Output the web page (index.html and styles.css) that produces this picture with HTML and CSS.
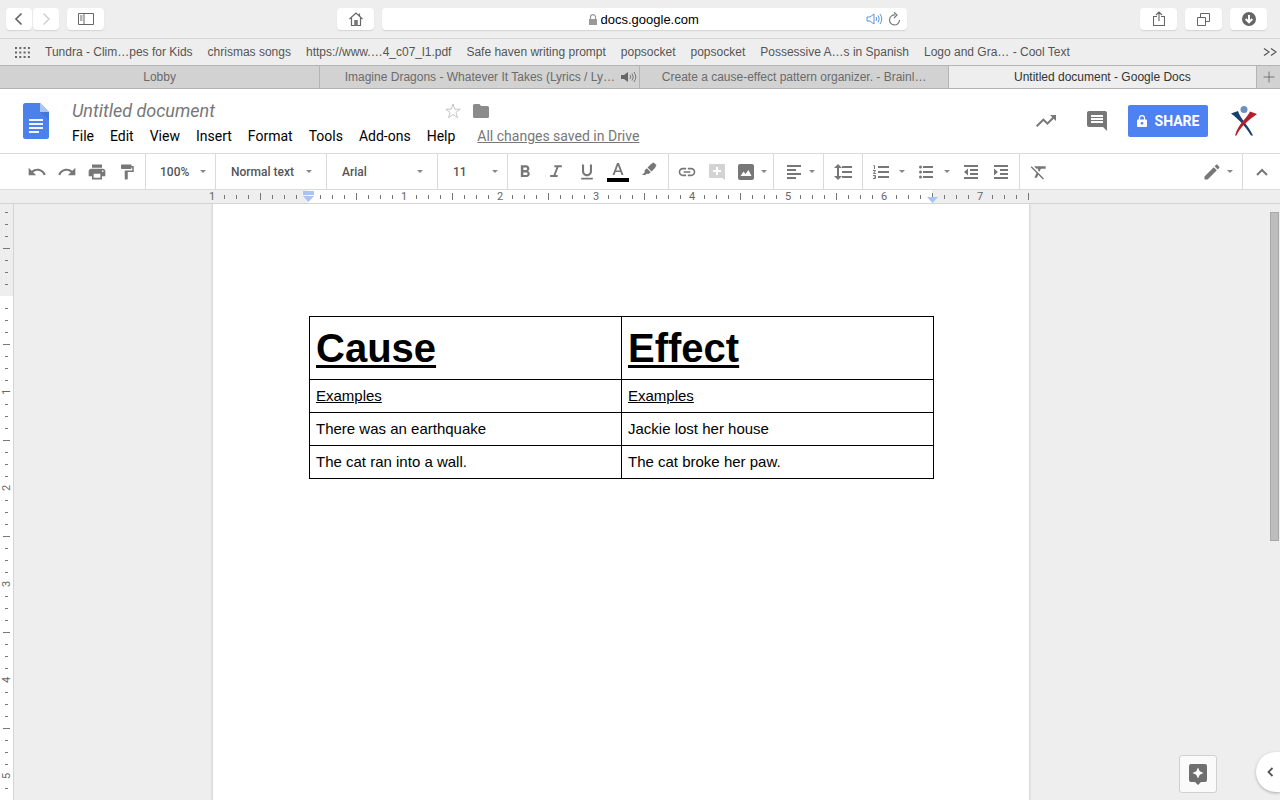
FILE: index.html
```html
<!DOCTYPE html>
<html lang="en">
<head>
    <meta charset="UTF-8">
    <meta name="viewport" content="width=device-width, initial-scale=1.0">
    <title>Untitled document - Google Docs</title>
    <link rel="stylesheet" href="styles.css">
</head>
<body>
    <!-- ruler ticks, one inch each -->
    <svg class="defs" aria-hidden="true">
        <symbol id="ticks-h" viewBox="0 0 96 14" preserveAspectRatio="xMinYMin slice">
            <path d="M12.5 5v4M24.5 5v4M36.5 5v4M48.5 3v7M60.5 5v4M72.5 5v4M84.5 5v4" stroke="#777" shape-rendering="crispEdges"/>
        </symbol>
        <symbol id="ticks-v" viewBox="0 0 13 96">
            <path d="M5 12.5h3M5 24.5h3M5 36.5h3M3 48.5h7M5 60.5h3M5 72.5h3M5 84.5h3" stroke="#777" shape-rendering="crispEdges"/>
        </symbol>
    </svg>

    <div class="browser-bar">
        <div class="nav-buttons">
            <button class="safari-btn nav" aria-label="Back"><svg width="10" height="14" viewBox="0 0 10 14"><path d="M7.5 1.5L2 7l5.500 5.500" fill="none" stroke="#666" stroke-width="1.700"/></svg></button>
            <button class="safari-btn nav" aria-label="Forward"><svg width="10" height="14" viewBox="0 0 10 14"><path d="M2.500 1.500L8 7l-5.500 5.500" fill="none" stroke="#d0d0d0" stroke-width="1.500"/></svg></button>
            <button class="safari-btn sidebar-btn" aria-label="Sidebar"><svg width="16" height="12" viewBox="0 0 16 12"><path d="M.5.5h15v11H.5zM6 .5v11M2 3h2.500M2 5h2.500M2 7h2.500" fill="none" stroke="#666"/></svg></button>
        </div>
        <div class="address">
            <button class="safari-btn" aria-label="Home"><svg width="14" height="14" viewBox="0 0 14 14"><path d="M.5 7L7 1l6.500 6M2.500 6v7.500h9V6M10.500 4V1.500" fill="none" stroke="#666" stroke-width="1.200"/><path d="M5.200 8h3.600v6H5.200z" fill="#777"/></svg></button>
            <div class="url-box">
                <svg width="8" height="11" viewBox="0 0 8 11"><rect y="5" width="8" height="6" fill="#999"/><path d="M1.500 5V3a2.500 2.300 0 015 0v2" fill="none" stroke="#999" stroke-width="1.200"/></svg>
                <input type="text" class="url" value="docs.google.com" aria-label="Address">
                <div class="url-icons">
                    <button class="plain" aria-label="Mute"><svg width="17" height="12" viewBox="0 0 17 12"><path d="M1 4h3l4-3v10L4 8H1zM10 4q1.500 2 0 4M12 2.500q2.500 3.500 0 7M14 1q3.500 5 0 10" fill="none" stroke="#5b94dc"/></svg></button>
                    <button class="plain" aria-label="Reload"><svg width="13" height="14" viewBox="0 0 13 14"><path d="M7 3A5 5 0 1011.500 8" fill="none" stroke="#777" stroke-width="1.200"/><path d="M6 .3L9 3 6 6" fill="none" stroke="#777" stroke-width="1.200"/></svg></button>
                </div>
            </div>
        </div>
        <div class="right-buttons">
            <button class="safari-btn" aria-label="Share page"><svg width="12" height="16" viewBox="0 0 12 16"><path d="M4 5.500H.5v9h11v-9H8M6 10V1M3 4l3-3 3 3" fill="none" stroke="#666" stroke-width="1.100"/></svg></button>
            <button class="safari-btn" aria-label="Show tabs"><svg width="13" height="13" viewBox="0 0 13 13"><path d="M.5 4.500h8v8h-8zM3.500 4V.5h9v8H9" fill="none" stroke="#666"/></svg></button>
            <button class="safari-btn" aria-label="Downloads"><svg width="14" height="14" viewBox="0 0 14 14"><circle cx="7" cy="7" r="7" fill="#666"/><path d="M7 3v7M3.700 7L7 10.300 10.300 7" fill="none" stroke="#fff" stroke-width="2"/></svg></button>
        </div>
    </div>

    <nav class="bookmarks">
        <svg width="15" height="11" viewBox="0 0 15 11"><path d="M0 1h15M0 5.500h15M0 10h15" stroke="#666" stroke-width="2" stroke-dasharray="2 2.300"/></svg>
        <a href="#">Tundra - Clim…pes for Kids</a>
        <a href="#">chrismas songs</a>
        <a href="#">https://www.…4_c07_l1.pdf</a>
        <a href="#">Safe haven writing prompt</a>
        <a href="#">popsocket</a>
        <a href="#">popsocket</a>
        <a href="#">Possessive A…s in Spanish</a>
        <a href="#">Logo and Gra… - Cool Text</a>
        <button class="plain more" aria-label="More bookmarks"><svg width="14" height="8" viewBox="0 0 14 8"><path d="M1 .5L6 4 1 7.500M8 .5L13 4 8 7.500" fill="none" stroke="#555" stroke-width="1.200"/></svg></button>
    </nav>

    <div class="tabs">
        <button class="tab wide">Lobby</button>
        <button class="tab wide">Imagine Dragons - Whatever It Takes (Lyrics / Ly…
            <svg class="speaker" width="17" height="12" viewBox="0 0 17 12"><path d="M1 4h3l4-3v10L4 8H1z" fill="#666"/><path d="M10 4q1.500 2 0 4M12 2.500q2.500 3.500 0 7M14 1q3.500 5 0 10" fill="none" stroke="#777"/></svg>
        </button>
        <button class="tab">Create a cause-effect pattern organizer. - Brainl…</button>
        <button class="tab active">Untitled document - Google Docs</button>
        <button class="tab new-tab" aria-label="New tab"><svg width="12" height="12" viewBox="0 0 12 12"><path d="M6 .5v11M.5 6h11" stroke="#777"/></svg></button>
    </div>

    <header class="docs-header">
        <svg class="logo" width="26" height="36" viewBox="0 0 26 36"><path d="M2.500 0H17l9 9v24.500a2.500 2.500 0 01-2.500 2.500h-21A2.500 2.500 0 010 33.500v-31A2.500 2.500 0 012.500 0z" fill="#4c80ea"/><path d="M17 0l9 9h-9z" fill="#a9c4f8"/><path d="M17 9h9v8z" fill="#4576dc"/><path d="M6 17h14M6 21h14M6 25h14M6 29h10" stroke="#f1f5fe" stroke-width="2"/></svg>
        <div class="doc-info">
            <div class="title-row">
                <input type="text" class="doc-title" value="Untitled document" aria-label="Document title">
                <button class="plain" aria-label="Star"><svg width="16" height="16" viewBox="0 0 16 16"><path d="M8 1l1.800 5.200h5.400l-4.300 3.200 1.600 5.300L8 11.500l-4.500 3.200 1.600-5.300L.8 6.200h5.400z" fill="none" stroke="#c4c4c4"/></svg></button>
                <button class="plain" aria-label="Move to folder"><svg width="16" height="14" viewBox="0 0 16 14"><path d="M1.500 0h5l1.500 2h6.500A1.500 1.500 0 0116 3.500v9a1.500 1.500 0 01-1.500 1.500h-13A1.500 1.500 0 010 12.500v-11A1.500 1.500 0 011.500 0z" fill="#8b8b8b"/></svg></button>
            </div>
            <div class="menu">
                <button>File</button>
                <button>Edit</button>
                <button>View</button>
                <button>Insert</button>
                <button>Format</button>
                <button>Tools</button>
                <button>Add-ons</button>
                <button>Help</button>
                <a href="#" class="saved">All changes saved in Drive</a>
            </div>
        </div>
        <div class="header-actions">
            <button class="plain" aria-label="Activity"><svg width="24" height="24" viewBox="0 0 24 24"><path d="M16 6l2.290 2.290-4.880 4.880-4-4L2 16.590 3.410 18l6-6 4 4 6.300-6.290L22 12V6z" fill="#777"/></svg></button>
            <button class="plain" aria-label="Comments"><svg width="24" height="24" viewBox="0 0 24 24"><path d="M21.990 4c0-1.100-.89-2-1.990-2H4c-1.100 0-2 .9-2 2v12c0 1.100.9 2 2 2h14l4 4-.01-18zM18 14H6v-2h12v2zm0-3H6V9h12v2zm0-3H6V6h12v2z" fill="#777"/></svg></button>
            <button class="share-btn"><svg width="10" height="13" viewBox="0 0 10 13"><rect y="4.500" width="10" height="7.500" rx="1" fill="#fff"/><path d="M2.500 5V3a2.500 2.400 0 015 0v2" fill="none" stroke="#fff" stroke-width="1.200"/><circle cx="5" cy="8.200" r="1.300" fill="#4d82f0"/></svg>SHARE</button>
            <svg width="26" height="30" viewBox="0 0 26 30"><circle cx="13" cy="3.500" r="3.500" fill="#6b93bd"/><path d="M0 7.500l7-2.500c2.500 8 10 14 15 24.500h-2C15 21 9 14.500 0 7.500z" fill="#17406f"/><path d="M26 8l-7-2.500C16.500 12 8 16 4 29.500h1.500C10 20 17 14.500 26 8z" fill="#b3202b"/></svg>
        </div>
    </header>

    <div class="toolbar">
        <div class="group first">
            <button aria-label="Undo"><svg class="i20" viewBox="0 0 24 24"><path d="M12.500 8c-2.650 0-5.050.99-6.900 2.600L2 7v9h9l-3.620-3.620c1.390-1.160 3.160-1.880 5.120-1.880 3.540 0 6.550 2.310 7.600 5.500l2.370-.78C21.080 11.030 17.150 8 12.500 8z"/></svg></button>
            <button aria-label="Redo"><svg class="i20" viewBox="0 0 24 24"><path d="M18.400 10.600C16.550 8.990 14.150 8 11.500 8c-4.650 0-8.580 3.030-9.960 7.220L3.900 16c1.050-3.190 4.050-5.500 7.600-5.500 1.950 0 3.730.72 5.120 1.880L13 16h9V7l-3.600 3.600z"/></svg></button>
            <button aria-label="Print"><svg class="i20" viewBox="0 0 24 24"><path d="M19 8H5c-1.660 0-3 1.340-3 3v6h4v4h12v-4h4v-6c0-1.660-1.340-3-3-3zm-3 11H8v-5h8v5zm3-7c-.55 0-1-.45-1-1s.45-1 1-1 1 .45 1 1-.45 1-1 1zm-1-9H6v4h12V3z"/></svg></button>
            <button aria-label="Paint format"><svg class="i18" viewBox="0 0 24 24"><path d="M18 4V3c0-.55-.45-1-1-1H5c-.55 0-1 .45-1 1v4c0 .55.45 1 1 1h12c.55 0 1-.45 1-1V6h1v4H9v11c0 .55.45 1 1 1h2c.55 0 1-.45 1-1v-9h8V4h-3z"/></svg></button>
        </div>
        <div class="group drop zoom-size"><select aria-label="Zoom"><option>100%</option></select></div>
        <div class="group drop style-name"><select aria-label="Styles"><option>Normal text</option></select></div>
        <div class="group drop font-name"><select aria-label="Font"><option>Arial</option></select></div>
        <div class="group drop font-size"><select aria-label="Font size"><option>11</option></select></div>
        <div class="group format">
            <button aria-label="Bold"><svg class="i20" viewBox="0 0 24 24"><path d="M15.600 10.790c.97-.67 1.650-1.770 1.650-2.790 0-2.260-1.750-4-4-4H7v14h7.040c2.090 0 3.710-1.700 3.710-3.790 0-1.520-.86-2.820-2.150-3.420zM10 6.500h3c.83 0 1.500.67 1.500 1.500s-.67 1.500-1.500 1.500h-3v-3zm3.500 9H10v-3h3.500c.83 0 1.500.67 1.500 1.500s-.67 1.500-1.500 1.500z"/></svg></button>
            <button aria-label="Italic"><svg class="i20" viewBox="0 0 24 24"><path d="M10 4v2.300h2.600L9 15.700H5V18h9v-2.300h-2.600L15 6.300h4V4z"/></svg></button>
            <button aria-label="Underline"><svg class="i20" viewBox="0 0 24 24"><path d="M12 17c3.310 0 6-2.690 6-6V3h-2.500v8c0 1.930-1.570 3.500-3.500 3.500S8.500 12.930 8.500 11V3H6v8c0 3.310 2.690 6 6 6zm-7 2v2h14v-2H5z"/></svg></button>
            <button aria-label="Text color"><svg width="22" height="20" viewBox="0 0 22 20"><path fill-rule="evenodd" d="M10 1h2l4.500 12h-2l-1.100-3H8.600l-1.100 3h-2zm1 2.500L9.200 8.400h3.600z"/><path d="M0 16h22v4H0z" fill="#000"/></svg></button>
            <button aria-label="Highlight color"><svg width="16" height="20" viewBox="0 0 16 20"><path d="M10 2l2.500-1.500L15.500 3 14 6l-3.500 3.500L6.500 5.500zM5.800 6.200l4 4L7.500 12l-2-.3-1.200 1.300H1L3.800 10.200 3.500 8.500z"/></svg></button>
        </div>
        <div class="group insert">
            <button aria-label="Insert link"><svg class="i20" viewBox="0 0 24 24"><path d="M3.900 12c0-1.710 1.390-3.100 3.100-3.100h4V7H7c-2.760 0-5 2.240-5 5s2.240 5 5 5h4v-1.900H7c-1.710 0-3.100-1.390-3.100-3.100zM8 13h8v-2H8v2zm9-6h-4v1.900h4c1.710 0 3.100 1.390 3.100 3.100s-1.390 3.100-3.100 3.100h-4V17h4c2.760 0 5-2.240 5-5s-2.240-5-5-5z"/></svg></button>
            <button aria-label="Add comment"><svg width="16" height="16" viewBox="0 0 16 16"><path d="M1 0h14q1 0 1 1v15l-3-2H1q-1 0-1-1V1q0-1 1-1z" fill="#d3d3d3"/><path d="M8 3v8M4 7h8" stroke="#fff" stroke-width="2"/></svg></button>
            <button class="with-caret" aria-label="Insert image"><svg width="16" height="16" viewBox="0 0 16 16"><rect width="16" height="16" rx="2"/><path d="M2.500 12l3-4.500 2 2.500 3-4 3 6z" fill="#fff"/></svg></button>
        </div>
        <div class="group align">
            <button class="with-caret" aria-label="Align"><svg width="16" height="16" viewBox="0 0 16 16"><path d="M1 1h14v2H1zM1 5h9v2H1zM1 9h14v2H1zM1 13h9v2H1z"/></svg></button>
        </div>
        <div class="group spacing">
            <button aria-label="Line spacing"><svg width="18" height="16" viewBox="0 0 18 16"><path d="M8 2h10v2H8zM8 7h10v2H8zM8 12h10v2H8zM3 4H0l4-4 4 4H5v8h3l-4 4-4-4h3z"/></svg></button>
        </div>
        <div class="group lists">
            <button class="with-caret" aria-label="Numbered list"><svg width="16" height="16" viewBox="0 0 16 16"><path d="M5 2h11v2H5zM5 7h11v2H5zM5 12h11v2H5z"/><path d="M.5 1.500h1V5M0 6.500h2.500L.5 9.500h2.500M0 11.500h2.500v3H0M.8 13h1.700" fill="none" stroke="#777"/></svg></button>
            <button class="with-caret" aria-label="Bulleted list"><svg width="16" height="16" viewBox="0 0 16 16"><path d="M5 2h10v2H5zM5 7h10v2H5zM5 12h10v2H5z"/><circle cx="2.500" cy="3" r="1.500"/><circle cx="2.500" cy="8" r="1.500"/><circle cx="2.500" cy="13" r="1.500"/></svg></button>
            <button aria-label="Decrease indent"><svg width="16" height="16" viewBox="0 0 16 16"><path d="M1 1h14v2H1zM7 5h8v2H7zM7 9h8v2H7zM1 13h14v2H1zM5 4.500v7L1 8z"/></svg></button>
            <button aria-label="Increase indent"><svg width="16" height="16" viewBox="0 0 16 16"><path d="M1 1h14v2H1zM7 5h8v2H7zM7 9h8v2H7zM1 13h14v2H1zM1 4.500v7L5 8z"/></svg></button>
        </div>
        <div class="group clear">
            <button aria-label="Clear formatting"><svg class="i20" viewBox="0 0 24 24"><path d="M3.270 5L2 6.270l6.970 6.970L6.500 19h3l1.570-3.660L16.730 21 18 19.730 3.550 5.270 3.270 5zM6 5v.18L8.820 8h2.400l-.72 1.680 2.100 2.100L14.210 8H20V5H6z"/></svg></button>
        </div>
        <div class="mode">
            <button class="with-caret" aria-label="Editing mode"><svg class="i20" viewBox="0 0 24 24"><path d="M3 17.250V21h3.750L17.810 9.940l-3.750-3.750L3 17.250zM20.710 7.040c.39-.39.39-1.020 0-1.410l-2.340-2.340c-.39-.39-1.020-.39-1.410 0l-1.830 1.830 3.750 3.750 1.830-1.830z"/></svg></button>
        </div>
        <button class="collapse" aria-label="Hide menus"><svg width="12" height="8" viewBox="0 0 12 8"><path d="M1 7l5-5 5 5" fill="none" stroke="#777" stroke-width="2"/></svg></button>
    </div>

    <div class="ruler">
        <div class="inches">
            <div class="inch"><span>1</span><svg><use href="#ticks-h"/></svg></div>
            <div class="inch inside"><svg><use href="#ticks-h"/></svg>
                <svg class="marker" viewBox="0 0 11 13"><path d="M0 1h11v4H0zM0 6h11l-5.500 6z" fill="#a9c3f2"/></svg>
            </div>
            <div class="inch inside"><span>1</span><svg><use href="#ticks-h"/></svg></div>
            <div class="inch inside"><span>2</span><svg><use href="#ticks-h"/></svg></div>
            <div class="inch inside"><span>3</span><svg><use href="#ticks-h"/></svg></div>
            <div class="inch inside"><span>4</span><svg><use href="#ticks-h"/></svg></div>
            <div class="inch inside"><span>5</span><svg><use href="#ticks-h"/></svg></div>
            <div class="inch edge"><span>6</span><svg><use href="#ticks-h"/></svg>
                <svg class="marker right" viewBox="0 0 11 13"><path d="M0 7h11l-5.500 6z" fill="#a9c3f2"/></svg>
            </div>
            <div class="inch last"><span>7</span><svg><use href="#ticks-h"/></svg></div>
        </div>
    </div>

    <div class="workspace">
        <div class="ruler-v">
            <div class="inch-v"><svg><use href="#ticks-v"/></svg></div>
            <div class="inch-v inside"><svg><use href="#ticks-v"/></svg></div>
            <div class="inch-v inside"><span>1</span><svg><use href="#ticks-v"/></svg></div>
            <div class="inch-v inside"><span>2</span><svg><use href="#ticks-v"/></svg></div>
            <div class="inch-v inside"><span>3</span><svg><use href="#ticks-v"/></svg></div>
            <div class="inch-v inside"><span>4</span><svg><use href="#ticks-v"/></svg></div>
            <div class="inch-v inside"><span>5</span><svg><use href="#ticks-v"/></svg></div>
        </div>
        <main class="canvas">
            <div class="page">
                <table>
                    <tr><th>Cause</th><th>Effect</th></tr>
                    <tr><td><u>Examples</u></td><td><u>Examples</u></td></tr>
                    <tr><td>There was an earthquake</td><td>Jackie lost her house</td></tr>
                    <tr><td>The cat ran into a wall.</td><td>The cat broke her paw.</td></tr>
                </table>
            </div>
        </main>
        <div class="scrollbar"><div class="thumb"></div></div>
        <button class="explore" aria-label="Explore"><svg width="18" height="21" viewBox="0 0 18 21"><path d="M2 0h14a2 2 0 012 2v14a2 2 0 01-2 2h-4l-3 3-3-3H2a2 2 0 01-2-2V2a2 2 0 012-2z" fill="#6e6e6e"/><path d="M9 3.500l1.700 3.800L14.500 9l-3.800 1.700L9 14.500l-1.700-3.800L3.500 9l3.800-1.700z" fill="#fff"/></svg></button>
        <button class="side-toggle" aria-label="Show side panel"><svg width="7" height="10" viewBox="0 0 7 10"><path d="M5.500 1l-4 4 4 4" fill="none" stroke="#555" stroke-width="1.800"/></svg></button>
    </div>
</body>
</html>
```

FILE: styles.css
```css
* {
    box-sizing: border-box;
}
body {
    margin: 0;
    height: 100vh;
    display: flex;
    flex-direction: column;
    overflow: hidden;
    background: #eee;
    font-family: Roboto, Arial, sans-serif;
}
button, input, select {
    font: inherit;
    color: inherit;
    border: none;
    background: none;
    padding: 0;
    margin: 0;
    outline: none;
}
button {
    display: flex;
    align-items: center;
    justify-content: center;
}
svg {
    display: block;
    flex-shrink: 0;
}
.defs {
    position: absolute;
    width: 0;
    height: 0;
}

/* Browser chrome */
.browser-bar {
    height: 39px;
    flex-shrink: 0;
    display: flex;
    align-items: center;
    padding: 0 13px 0 6px;
    border-bottom: 1px solid #d6d6d6;
    font-family: "Liberation Sans", Arial, sans-serif;
}
.nav-buttons, .right-buttons {
    display: flex;
    gap: 8px;
}
.nav-buttons {
    gap: 1px;
}
.safari-btn {
    width: 37px;
    height: 22px;
    background: #fff;
    border-radius: 4px;
    box-shadow: 0 1px 1px #d4d4d4;
}
.nav {
    width: 26px;
}
.sidebar-btn {
    margin-left: 7px;
}
.address {
    flex: 1;
    margin: 0 233px;
    display: flex;
    gap: 8px;
}
.url-box {
    flex: 1;
    height: 22px;
    background: #fff;
    border-radius: 4px;
    box-shadow: 0 1px 1px #d4d4d4;
    display: flex;
    align-items: center;
    justify-content: center;
    gap: 4px;
    position: relative;
}
.url {
    width: 100px;
    font-size: 13px;
    color: #000;
}
.url-icons {
    position: absolute;
    right: 6px;
    display: flex;
    align-items: center;
    gap: 5px;
}
.bookmarks {
    height: 26px;
    flex-shrink: 0;
    display: flex;
    align-items: center;
    gap: 15px;
    padding: 0 3px 0 15px;
    font-family: "Liberation Sans", Arial, sans-serif;
    font-size: 12px;
    white-space: nowrap;
}
.bookmarks a {
    color: #555;
    text-decoration: none;
}
.more {
    margin-left: auto;
}
.tabs {
    height: 24px;
    flex-shrink: 0;
    display: flex;
    border-top: 1px solid #b4b4b4;
    border-bottom: 1px solid #b4b4b4;
    background: #d2d2d2;
    font-family: "Liberation Sans", Arial, sans-serif;
    font-size: 12px;
    color: #6b6b6b;
}
.tab {
    flex: 308 1 0;
    border-right: 1px solid #b4b4b4;
    white-space: nowrap;
    position: relative;
}
.tab.wide {
    flex-grow: 320;
}
.tab.active {
    background: #eee;
    color: #333;
}
.tab.new-tab {
    flex: 0 0 23px;
    border-right: none;
}
.speaker {
    position: absolute;
    right: 2px;
}

/* Docs header */
.docs-header {
    height: 64px;
    flex-shrink: 0;
    display: flex;
    padding: 0 23px;
    background: #fff;
}
.logo {
    margin-top: 14px;
}
.doc-info {
    margin-left: 23px;
    padding-top: 10px;
}
.title-row {
    display: flex;
    align-items: center;
    height: 24px;
    gap: 12px;
}
.doc-title {
    width: 361px;
    padding-bottom: 2px;
    font-size: 18px;
    font-style: italic;
    color: #777;
}
.menu {
    display: flex;
    align-items: center;
    height: 26px;
    gap: 16px;
    font-size: 14px;
    color: #000;
    white-space: nowrap;
}
.saved {
    margin-left: 6px;
    color: #777;
}
.header-actions {
    margin-left: auto;
    display: flex;
    align-items: center;
    gap: 23px;
}
.header-actions .plain {
    margin-right: 4px;
}
.header-actions .share-btn {
    margin-left: -8px;
}
.share-btn {
    width: 80px;
    height: 32px;
    gap: 8px;
    border-radius: 2px;
    background: #4d82f0;
    color: #fff;
    font-size: 14px;
    font-weight: 700;
}

/* Toolbar */
.toolbar {
    height: 37px;
    flex-shrink: 0;
    display: flex;
    background: #fff;
    border-top: 1px solid #dadada;
    border-bottom: 1px solid #dadada;
    font-size: 12px;
    color: #555;
}
.toolbar svg {
    fill: #777;
}
.i20 {
    width: 20px;
    height: 20px;
}
.i18 {
    width: 18px;
    height: 18px;
}
.group {
    display: flex;
    align-items: center;
    border-right: 1px solid #dadada;
}
.group button {
    width: 30px;
    height: 30px;
    flex-shrink: 0;
}
.first {
    padding: 0 3px 0 22px;
}
.drop::after, .with-caret::after {
    content: "";
    border: 3px solid transparent;
    border-top-color: #888;
    border-bottom: none;
}
.drop {
    padding: 0 9px 0 15px;
}
.drop select {
    flex: 1;
    min-width: 0;
    appearance: none;
    font-weight: 500;
}
.zoom-size {
    width: 70px;
    padding-left: 14px;
}
.style-name, .font-name {
    width: 111px;
    padding-right: 14px;
}
.font-size {
    width: 70px;
}
.format {
    width: 161px;
    padding-left: 1px;
}
.format button {
    width: 31px;
}
.insert {
    width: 105px;
    padding-left: 3px;
}
.group .with-caret {
    width: 40px;
    gap: 7px;
}
.align {
    width: 50px;
    padding-left: 6px;
}
.spacing {
    width: 39px;
    padding-left: 4px;
}
.lists {
    width: 157px;
    padding-left: 3px;
}
.group.lists .with-caret {
    width: 45px;
    gap: 10px;
}
.clear {
    border-right: none;
    padding-left: 4px;
}
.mode {
    margin-left: auto;
    display: flex;
    padding-right: 9px;
    border-right: 1px solid #dadada;
}
.mode .with-caret {
    gap: 5px;
}
.collapse {
    width: 37px;
}

/* Rulers */
.ruler {
    height: 14px;
    flex-shrink: 0;
    display: flex;
    justify-content: center;
    padding-right: 39px;
    border-bottom: 1px solid #d4d4d4;
    color: #666;
    font-size: 11px;
}
.inches {
    display: flex;
    width: 817px;
}
.inch {
    position: relative;
    width: 96px;
    flex-shrink: 0;
    height: 13px;
}
.inch > svg {
    width: 100%;
    height: 14px;
}
.inside {
    background: #fff;
}
.edge {
    background: linear-gradient(90deg, #fff 50%, #eee 50%);
}
.last {
    width: 49px;
}
.inch span {
    position: absolute;
    left: -6px;
    width: 12px;
    line-height: 14px;
    text-align: center;
}
.inch > .marker {
    position: absolute;
    left: -5px;
    top: 0;
    width: 11px;
    height: 13px;
    z-index: 1;
}
.inch > .marker.right {
    left: 43px;
}
.workspace {
    flex: 1;
    min-height: 0;
    display: flex;
    position: relative;
}
.ruler-v {
    width: 14px;
    flex-shrink: 0;
    overflow: hidden;
    border-right: 1px solid #d4d4d4;
    color: #666;
    font-size: 11px;
}
.inch-v {
    position: relative;
    height: 96px;
}
.inch-v:first-child {
    margin-top: -4px;
}
.inch-v svg {
    width: 13px;
    height: 96px;
}
.inch-v span {
    position: absolute;
    top: -6px;
    height: 12px;
    line-height: 14px;
    writing-mode: vertical-rl;
    transform: rotate(180deg);
    text-align: center;
}

/* Document */
.canvas {
    flex: 1;
    display: flex;
    justify-content: center;
    padding-right: 42px;
    overflow: hidden;
}
.page {
    width: 816px;
    padding: 112px 95px 0 96px;
    background: #fff;
    box-shadow: 0 0 2px 1px #d0d0d0;
    font-family: "Liberation Sans", Arial, sans-serif;
    color: #000;
}
table {
    width: 100%;
    border-collapse: collapse;
    table-layout: fixed;
}
th, td {
    border: 1px solid #000;
    padding: 0 6px;
    height: 33px;
    font-size: 15px;
    text-align: left;
}
td {
    padding-bottom: 2px;
}
th {
    height: 63px;
    font-size: 40px;
    text-decoration: underline;
    text-decoration-thickness: 3px;
    text-underline-offset: 3px;
}
.scrollbar {
    width: 10px;
    padding: 8px 1px 0 0;
}
.thumb {
    height: 329px;
    background: #bdbdbd;
    border: 1px solid #a8a8a8;
}
.explore {
    position: absolute;
    right: 63px;
    bottom: 7px;
    width: 38px;
    height: 38px;
    background: #fafafa;
    border: 1px solid #d0d0d0;
    border-radius: 3px;
}
.side-toggle {
    position: absolute;
    right: 0;
    bottom: 8px;
    width: 24px;
    height: 40px;
    padding-left: 4px;
    background: #fff;
    border-radius: 20px 0 0 20px;
    box-shadow: 0 1px 3px #aaa;
}
```
